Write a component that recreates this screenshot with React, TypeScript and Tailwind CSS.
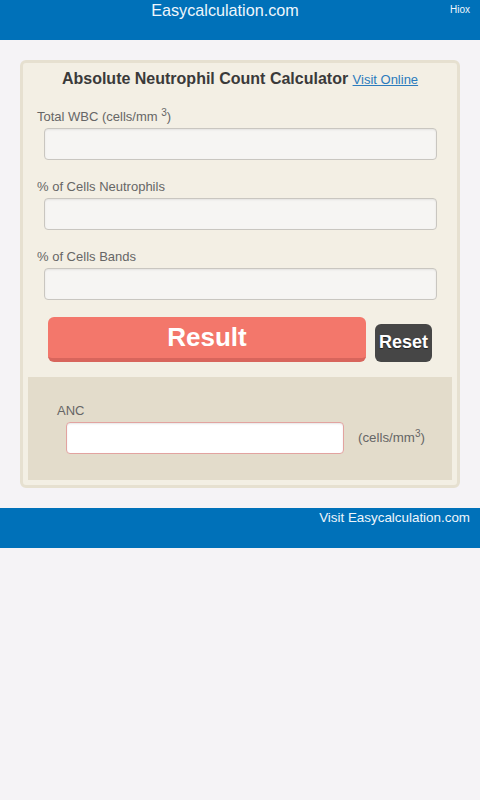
import React from "react";

export default function App() {
  return (
    <div className="min-h-[800px] w-full bg-[#f5f3f6] font-['Liberation_Sans',Arial,sans-serif]">
      <header className="flex h-[40px] bg-[#0071b9] text-[#eef6fc]">
        <div className="flex-1 text-center text-[16.2px] leading-[20px]">Easycalculation.com</div>
        <div className="w-[30px] text-[10px] leading-[20px]">Hiox</div>
      </header>

      <div className="mx-[20px] mt-[20px] rounded-[6px] border-[3px] border-[#e6e0d0] bg-[#f3efe4] pb-[5px] pt-[6px]">
        <div className="text-center leading-[20px]">
          <span className="text-[16px] font-bold text-[#3a3a3a]">Absolute Neutrophil Count Calculator</span>{" "}
          <a href="#" className="text-[13px] text-[#2b7bbd] underline">Visit Online</a>
        </div>

        <div className="mt-[19px] pl-[14px] text-[13px] leading-[16px] text-[#666]">
          Total WBC (cells/mm <sup className="text-[10px]">3</sup>)
        </div>
        <div className="ml-[21px] mr-[20px] mt-[3px] h-[32px] rounded-[4px] border border-[#c9c6c0] bg-[#f6f5f3] shadow-[inset_0_1px_2px_rgba(0,0,0,0.08)]" />

        <div className="mt-[19px] pl-[14px] text-[13px] leading-[16px] text-[#666]">% of Cells Neutrophils</div>
        <div className="ml-[21px] mr-[20px] mt-[3px] h-[32px] rounded-[4px] border border-[#c9c6c0] bg-[#f6f5f3] shadow-[inset_0_1px_2px_rgba(0,0,0,0.08)]" />

        <div className="mt-[19px] pl-[14px] text-[13px] leading-[16px] text-[#666]">% of Cells Bands</div>
        <div className="ml-[21px] mr-[20px] mt-[3px] h-[32px] rounded-[4px] border border-[#c9c6c0] bg-[#f6f5f3] shadow-[inset_0_1px_2px_rgba(0,0,0,0.08)]" />

        <div className="mt-[17px] flex items-end gap-[9px] px-[25px]">
          <button className="flex h-[45px] w-[318px] items-center justify-center rounded-[6px] border-b-[4px] border-[#d8655c] bg-[#f3776b] pb-[2px] text-[26px] font-bold leading-none text-white">
            Result
          </button>
          <button className="flex h-[38px] w-[57px] items-center justify-center rounded-[6px] bg-[#464646] pb-[2px] text-[18px] font-bold leading-none text-white [text-shadow:0_1px_1px_rgba(0,0,0,0.6)]">
            Reset
          </button>
        </div>

        <div className="mx-[5px] mt-[15px] bg-[#e3dccb] pb-[26px] pt-[26px]">
          <div className="pl-[29px] text-[13px] leading-[16px] text-[#666]">ANC</div>
          <div className="mt-[3px] flex items-center">
            <div className="ml-[38px] h-[32px] w-[278px] rounded-[4px] border border-[#e2a3a0] bg-white shadow-[inset_0_1px_2px_rgba(0,0,0,0.1)]" />
            <div className="ml-[14px] text-[13.3px] text-[#666]">
              (cells/mm<sup className="text-[10px]">3</sup>)
            </div>
          </div>
        </div>
      </div>

      <footer className="mt-[20px] h-[40px] bg-[#0071b9] pr-[10px] text-right text-[13.4px] leading-[20px] text-[#eef6fc]">
        Visit Easycalculation.com
      </footer>
    </div>
  );
}
